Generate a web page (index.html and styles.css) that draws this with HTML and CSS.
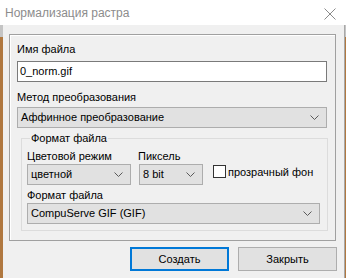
FILE: index.html
```html
<!DOCTYPE html>
<html lang="ru">
<head>
    <meta charset="UTF-8">
    <title>Нормализация растра</title>
    <link rel="stylesheet" href="styles.css">
</head>
<body>
    <div class="window">
        <div class="titlebar">
            <span class="title">Нормализация растра</span>
            <svg class="close" width="12" height="12" viewBox="0 0 12 12">
                <path d="M0.5 0.5 L11.5 11.5 M11.5 0.5 L0.5 11.5" stroke="#8a8a8a" stroke-width="1" fill="none"/>
            </svg>
        </div>
        <div class="client">
            <div class="panel">
                <div class="label">Имя файла</div>
                <div class="edit">0_norm.gif</div>
                <div class="label label-gap">Метод преобразования</div>
                <div class="combo combo-wide">
                    <span>Аффинное преобразование</span>
                    <svg class="chevron" width="9" height="5" viewBox="0 0 9 5"><path d="M0.5 0.5 L4.5 4.5 L8.5 0.5" stroke="#5a5a5a" fill="none"/></svg>
                </div>
                <fieldset class="group">
                    <legend>Формат файла</legend>
                    <div class="row">
                        <div class="col col-mode">
                            <div class="label">Цветовой режим</div>
                            <div class="combo">
                                <span>цветной</span>
                                <svg class="chevron" width="9" height="5" viewBox="0 0 9 5"><path d="M0.5 0.5 L4.5 4.5 L8.5 0.5" stroke="#5a5a5a" fill="none"/></svg>
                            </div>
                        </div>
                        <div class="col col-pixel">
                            <div class="label">Пиксель</div>
                            <div class="combo">
                                <span>8 bit</span>
                                <svg class="chevron" width="9" height="5" viewBox="0 0 9 5"><path d="M0.5 0.5 L4.5 4.5 L8.5 0.5" stroke="#5a5a5a" fill="none"/></svg>
                            </div>
                        </div>
                        <label class="check">
                            <span class="box"></span>
                            <span>прозрачный фон</span>
                        </label>
                    </div>
                    <div class="label">Формат файла</div>
                    <div class="combo">
                        <span>CompuServe GIF (GIF)</span>
                        <svg class="chevron" width="9" height="5" viewBox="0 0 9 5"><path d="M0.5 0.5 L4.5 4.5 L8.5 0.5" stroke="#5a5a5a" fill="none"/></svg>
                    </div>
                </fieldset>
            </div>
            <div class="buttons">
                <button class="btn btn-default">Создать</button>
                <button class="btn">Закрыть</button>
            </div>
        </div>
    </div>
</body>
</html>
```

FILE: styles.css
```css
body {
    margin: 0;
    padding: 0;
    width: 346px;
    height: 278px;
    overflow: hidden;
    background: linear-gradient(#c4c4c4 0, #c4c4c4 37px, #b07840 37px, #b07840 100%);
    font-family: "Liberation Sans", Arial, sans-serif;
    font-size: 11px;
    color: #000;
}
.window {
    width: 346px;
}
.titlebar {
    height: 25px;
    background-color: #ffffff;
    display: flex;
    align-items: center;
    justify-content: space-between;
    padding: 0 10px 0 5px;
    box-sizing: border-box;
}
.title {
    color: #8c8c8c;
    font-size: 12px;
    line-height: 16px;
}
.close {
    display: block;
    margin-top: 2px;
}
.client {
    margin-left: 3px;
    width: 341px;
    height: 252px;
    background-color: #f0f0f0;
    border-right: 1px solid #a8a8a8;
    padding-top: 9px;
}
.panel {
    margin-left: 6px;
    width: 310px;
    border: 1px solid #a0a0a0;
    box-shadow: inset 1px 1px 0 #ffffff;
    padding: 6px 8px 9px 7px;
}
.label {
    line-height: 16px;
    white-space: nowrap;
}
.label-gap {
    margin-top: 7px;
}
.edit {
    margin-top: 4px;
    height: 19px;
    border: 1px solid #7a7a7a;
    background-color: #ffffff;
    line-height: 19px;
    padding-left: 2px;
}
.combo {
    height: 19px;
    border: 1px solid #adadad;
    background-color: #e1e1e1;
    display: flex;
    align-items: center;
    justify-content: space-between;
    padding: 0 7px 0 3px;
    line-height: 19px;
}
.combo-wide {
    margin-top: 2px;
}
.chevron {
    display: block;
}
.group {
    margin: 2px -1px 0 4px;
    border: 1px solid #dcdcdc;
    padding: 2px 7px 6px 5px;
}
.group legend {
    padding: 0 1px;
    margin-left: 3px;
    line-height: 16px;
}
.row {
    display: flex;
    align-items: flex-end;
    margin-bottom: 2px;
}
.col-mode {
    width: 104px;
}
.col-pixel {
    width: 64px;
    margin-left: 8px;
}
.col-pixel .label {
    margin-left: -1px;
}
.check {
    display: flex;
    align-items: center;
    margin-left: 10px;
    margin-bottom: 6px;
    height: 15px;
    white-space: nowrap;
}
.box {
    width: 11px;
    height: 11px;
    border: 1px solid #333333;
    background-color: #ffffff;
    margin-right: 2px;
}
.buttons {
    display: flex;
    justify-content: flex-end;
    gap: 9px;
    margin-top: 6px;
    margin-right: 7px;
}
.btn {
    width: 99px;
    height: 24px;
    border: 1px solid #adadad;
    background-color: #e1e1e1;
    font-family: "Liberation Sans", Arial, sans-serif;
    font-size: 11px;
    color: #000;
    padding: 0;
}
.btn-default {
    border: 2px solid #0078d7;
}
```
